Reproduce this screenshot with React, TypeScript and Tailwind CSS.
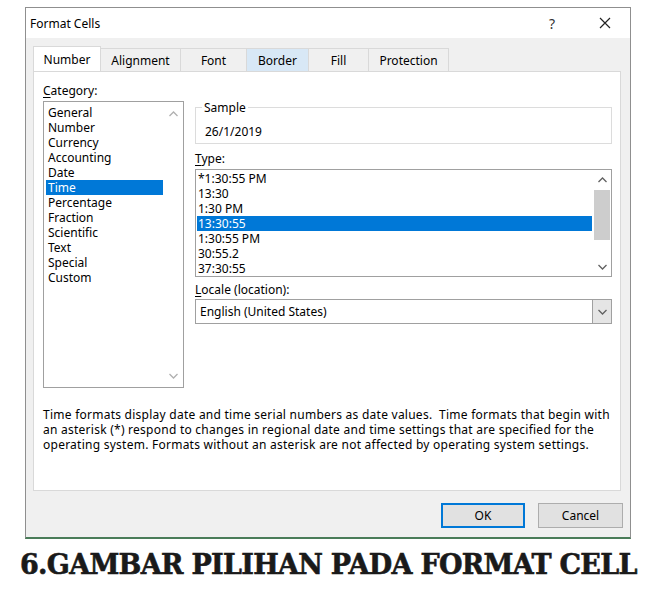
import React from "react";

const ui = "font-['Noto_Sans',sans-serif] text-[12px] leading-[15px] text-black";

const categories = [
    "General",
    "Number",
    "Currency",
    "Accounting",
    "Date",
    "Time",
    "Percentage",
    "Fraction",
    "Scientific",
    "Text",
    "Special",
    "Custom",
];

const types = ["*1:30:55 PM", "13:30", "1:30 PM", "13:30:55", "1:30:55 PM", "30:55.2", "37:30:55"];

const tabs = [
    { label: "Number", w: "w-[68px]" },
    { label: "Alignment", w: "w-[80px]" },
    { label: "Font", w: "w-[66px]" },
    { label: "Border", w: "w-[62px]" },
    { label: "Fill", w: "w-[60px]" },
    { label: "Protection", w: "w-[80px]" },
];

const Chevron: React.FC<{ up?: boolean; color?: string }> = ({ up, color = "#606060" }) => (
    <svg width="9" height="6" viewBox="0 0 9 6" fill="none">
        <polyline
            points={up ? "0.5,5 4.5,1 8.5,5" : "0.5,1 4.5,5 8.5,1"}
            stroke={color}
            strokeWidth="1.3"
        />
    </svg>
);

const Tab: React.FC<{ label: string; w: string }> = ({ label, w }) => {
    if (label === "Number") {
        return (
            <div
                className={`${w} h-[25px] -mt-[2px] -mb-px relative z-10 flex items-center justify-center bg-white border border-b-0 border-[#d9d9d9]`}
            >
                {label}
            </div>
        );
    }
    return (
        <div
            className={`${w} h-[23px] flex items-center justify-center border border-l-0 border-b-0 border-[#d9d9d9] ${
                label === "Border" ? "bg-[#d8e8f6]" : "bg-[#f0f0f0]"
            }`}
        >
            {label}
        </div>
    );
};

export default function App() {
    return (
        <div className="min-h-[600px] bg-white pt-[7px] pl-[25px]">
            <div className={`${ui} w-[606px] h-[532px] flex flex-col bg-[#f0f0f0] border border-[#8f8f8f] border-b-2 border-b-[#4a7c59]`}>
                {/* title bar */}
                <div className="h-[30px] bg-white flex items-center pl-[4px]">
                    <div className="flex-1">Format Cells</div>
                    <div className="w-[20px] text-center text-[14px] text-[#333]">?</div>
                    <div className="w-[24px] ml-[31px] mr-[13px] flex justify-center">
                        <svg width="12" height="12" viewBox="0 0 12 12">
                            <path d="M1 1L11 11M11 1L1 11" stroke="#222" strokeWidth="1.2" />
                        </svg>
                    </div>
                </div>

                {/* tabs */}
                <div className="mt-[10px] ml-[7px] flex">
                    {tabs.map((t) => (
                        <Tab key={t.label} label={t.label} w={t.w} />
                    ))}
                </div>

                {/* panel */}
                <div className="ml-[7px] w-[588px] h-[420px] bg-white border border-[#d9d9d9] pl-[9px] pt-[11px]">
                    <div className="flex gap-[11px]">
                        <div className="w-[141px] flex flex-col">
                            <div>
                                <span className="underline underline-offset-2">C</span>ategory:
                            </div>
                            <div className="mt-[3px] h-[287px] border border-[#a0a0a0] flex">
                                <div className="flex-1 pt-[3px] pl-[2px]">
                                    {categories.map((c) => (
                                        <div
                                            key={c}
                                            className={`px-[2px] h-[15px] ${c === "Time" ? "bg-[#0078d7] text-white" : ""}`}
                                        >
                                            {c}
                                        </div>
                                    ))}
                                </div>
                                <div className="w-[20px] flex flex-col items-center justify-between pt-[9px] pb-[8px]">
                                    <Chevron up color="#b0b0b0" />
                                    <Chevron color="#b0b0b0" />
                                </div>
                            </div>
                        </div>

                        <div className="w-[417px] flex flex-col">
                            <div className="mt-[24px] h-[37px] border border-[#dcdcdc] relative pl-[9px] pt-[16px]">
                                <span className="absolute -top-[8px] left-[6px] bg-white px-[2px]">Sample</span>
                                26/1/2019
                            </div>
                            <div className="mt-[7px]">
                                <span className="underline underline-offset-2">T</span>ype:
                            </div>
                            <div className="mt-[3px] h-[108px] border border-[#a0a0a0] flex">
                                <div className="flex-1 pt-[1px] pl-px">
                                    {types.map((t) => (
                                        <div
                                            key={t}
                                            className={`h-[15px] pl-px ${t === "13:30:55" ? "bg-[#0078d7] text-white" : ""}`}
                                        >
                                            {t}
                                        </div>
                                    ))}
                                </div>
                                <div className="w-[18px] ml-[1px] flex flex-col items-center">
                                    <div className="h-[20px] flex items-center">
                                        <Chevron up />
                                    </div>
                                    <div className="w-[16px] h-[50px] bg-[#cdcdcd]" />
                                    <div className="flex-1 flex items-end pb-[6px]">
                                        <Chevron />
                                    </div>
                                </div>
                            </div>
                            <div className="mt-[5px]">
                                <span className="underline underline-offset-2">L</span>ocale (location):
                            </div>
                            <div className="mt-[2px] h-[25px] border border-[#a0a0a0] flex items-center">
                                <div className="flex-1 pl-[4px]">English (United States)</div>
                                <div className="w-[19px] h-full bg-[#e5e5e5] border-l border-[#a0a0a0] flex items-center justify-center">
                                    <Chevron />
                                </div>
                            </div>
                        </div>
                    </div>

                    <div className="mt-[19px] pr-[4px] tracking-[0.25px] whitespace-nowrap">
                        Time formats display date and time serial numbers as date values.&nbsp; Time formats that begin with
                        <br />
                        an asterisk (*) respond to changes in regional date and time settings that are specified for the
                        <br />
                        operating system. Formats without an asterisk are not affected by operating system settings.
                    </div>
                </div>

                {/* buttons */}
                <div className="mt-[12px] flex justify-end gap-[13px] pr-[7px]">
                    <button className="w-[84px] h-[25px] bg-[#e1e1e1] border-2 border-[#0078d7]">OK</button>
                    <button className="w-[85px] h-[25px] bg-[#e1e1e1] border border-[#adadad]">Cancel</button>
                </div>
            </div>

            <div className="-ml-[5px] mt-[10px] font-['DejaVu_Serif',serif] font-bold text-[27px] leading-[32px] tracking-[-0.7px] [-webkit-text-stroke:0.6px_#1a1a1a] text-[#1a1a1a] whitespace-nowrap">
                6.GAMBAR PILIHAN PADA FORMAT CELL
            </div>
        </div>
    );
}
